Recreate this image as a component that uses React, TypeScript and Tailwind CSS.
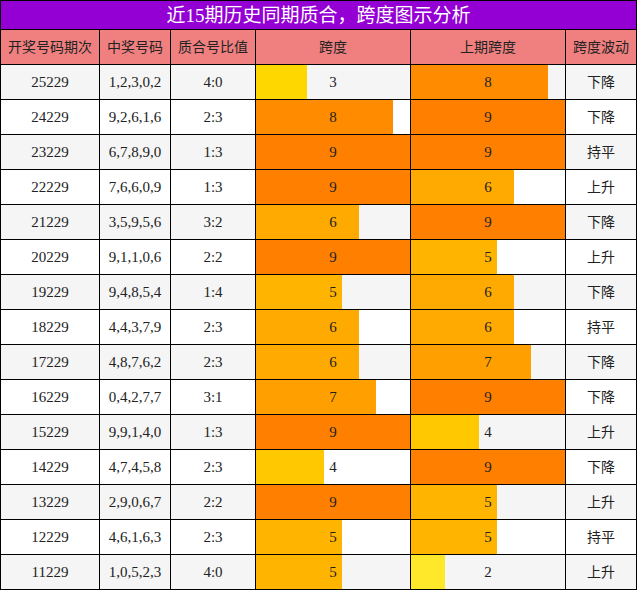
import React from 'react';

interface Row {
  issue: string;
  nums: string;
  ratio: string;
  span: number;
  prev: number;
  trend: string;
}

const rows: Row[] = [
  { issue: '25229', nums: '1,2,3,0,2', ratio: '4:0', span: 3, prev: 8, trend: '下降' },
  { issue: '24229', nums: '9,2,6,1,6', ratio: '2:3', span: 8, prev: 9, trend: '下降' },
  { issue: '23229', nums: '6,7,8,9,0', ratio: '1:3', span: 9, prev: 9, trend: '持平' },
  { issue: '22229', nums: '7,6,6,0,9', ratio: '1:3', span: 9, prev: 6, trend: '上升' },
  { issue: '21229', nums: '3,5,9,5,6', ratio: '3:2', span: 6, prev: 9, trend: '下降' },
  { issue: '20229', nums: '9,1,1,0,6', ratio: '2:2', span: 9, prev: 5, trend: '上升' },
  { issue: '19229', nums: '9,4,8,5,4', ratio: '1:4', span: 5, prev: 6, trend: '下降' },
  { issue: '18229', nums: '4,4,3,7,9', ratio: '2:3', span: 6, prev: 6, trend: '持平' },
  { issue: '17229', nums: '4,8,7,6,2', ratio: '2:3', span: 6, prev: 7, trend: '下降' },
  { issue: '16229', nums: '0,4,2,7,7', ratio: '3:1', span: 7, prev: 9, trend: '下降' },
  { issue: '15229', nums: '9,9,1,4,0', ratio: '1:3', span: 9, prev: 4, trend: '上升' },
  { issue: '14229', nums: '4,7,4,5,8', ratio: '2:3', span: 4, prev: 9, trend: '下降' },
  { issue: '13229', nums: '2,9,0,6,7', ratio: '2:2', span: 9, prev: 5, trend: '上升' },
  { issue: '12229', nums: '4,6,1,6,3', ratio: '2:3', span: 5, prev: 5, trend: '持平' },
  { issue: '11229', nums: '1,0,5,2,3', ratio: '4:0', span: 5, prev: 2, trend: '上升' },
];

// bar colour by span value
const barColors: Record<number, string> = {
  0: '#FFF176',
  1: '#FFF176',
  2: '#FFE82A',
  3: '#FFD700',
  4: '#FFC800',
  5: '#FFB400',
  6: '#FFAA00',
  7: '#FFA000',
  8: '#FF8C00',
  9: '#FF8000',
};

const headers = ['开奖号码期次', '中奖号码', '质合号比值', '跨度', '上期跨度', '跨度波动'];

const font = { fontFamily: '"Liberation Serif", "Noto Sans CJK SC", serif' };

const BarCell: React.FC<{ value: number; bg: string }> = ({ value, bg }) => (
  <div className={`relative flex items-center justify-center ${bg}`}>
    <div
      className="absolute left-0 top-0 bottom-0"
      style={{ width: `${(value / 9) * 100}%`, backgroundColor: barColors[value] }}
    />
    <span className="relative text-[15px] text-[#222]">{value}</span>
  </div>
);

export default function App() {
  return (
    <div className="w-[637px] h-[590px] bg-white" style={font}>
      <div className="grid grid-cols-[98px_70px_84px_154px_154px_70px] grid-rows-[28px_repeat(16,34px)] gap-px bg-black border border-black">
        {/* Title */}
        <div className="col-span-6 bg-[#9400D3] flex items-center justify-center text-white text-[19px] leading-none">
          近15期历史同期质合，跨度图示分析
        </div>

        {/* Header */}
        {headers.map(h => (
          <div key={h} className="bg-[#F08080] flex items-center justify-center text-[14px] text-[#222]">
            {h}
          </div>
        ))}

        {/* Rows */}
        {rows.map((r, i) => {
          const bg = i % 2 === 0 ? 'bg-[#F5F5F5]' : 'bg-white';
          return (
            <React.Fragment key={r.issue}>
              <div className={`${bg} flex items-center justify-center text-[15px] text-[#222]`}>{r.issue}</div>
              <div className={`${bg} flex items-center justify-center text-[15px] text-[#222]`}>{r.nums}</div>
              <div className={`${bg} flex items-center justify-center text-[15px] text-[#222]`}>{r.ratio}</div>
              <BarCell value={r.span} bg={bg} />
              <BarCell value={r.prev} bg={bg} />
              <div className={`${bg} flex items-center justify-center text-[14px] text-[#222]`}>{r.trend}</div>
            </React.Fragment>
          );
        })}
      </div>
    </div>
  );
}
